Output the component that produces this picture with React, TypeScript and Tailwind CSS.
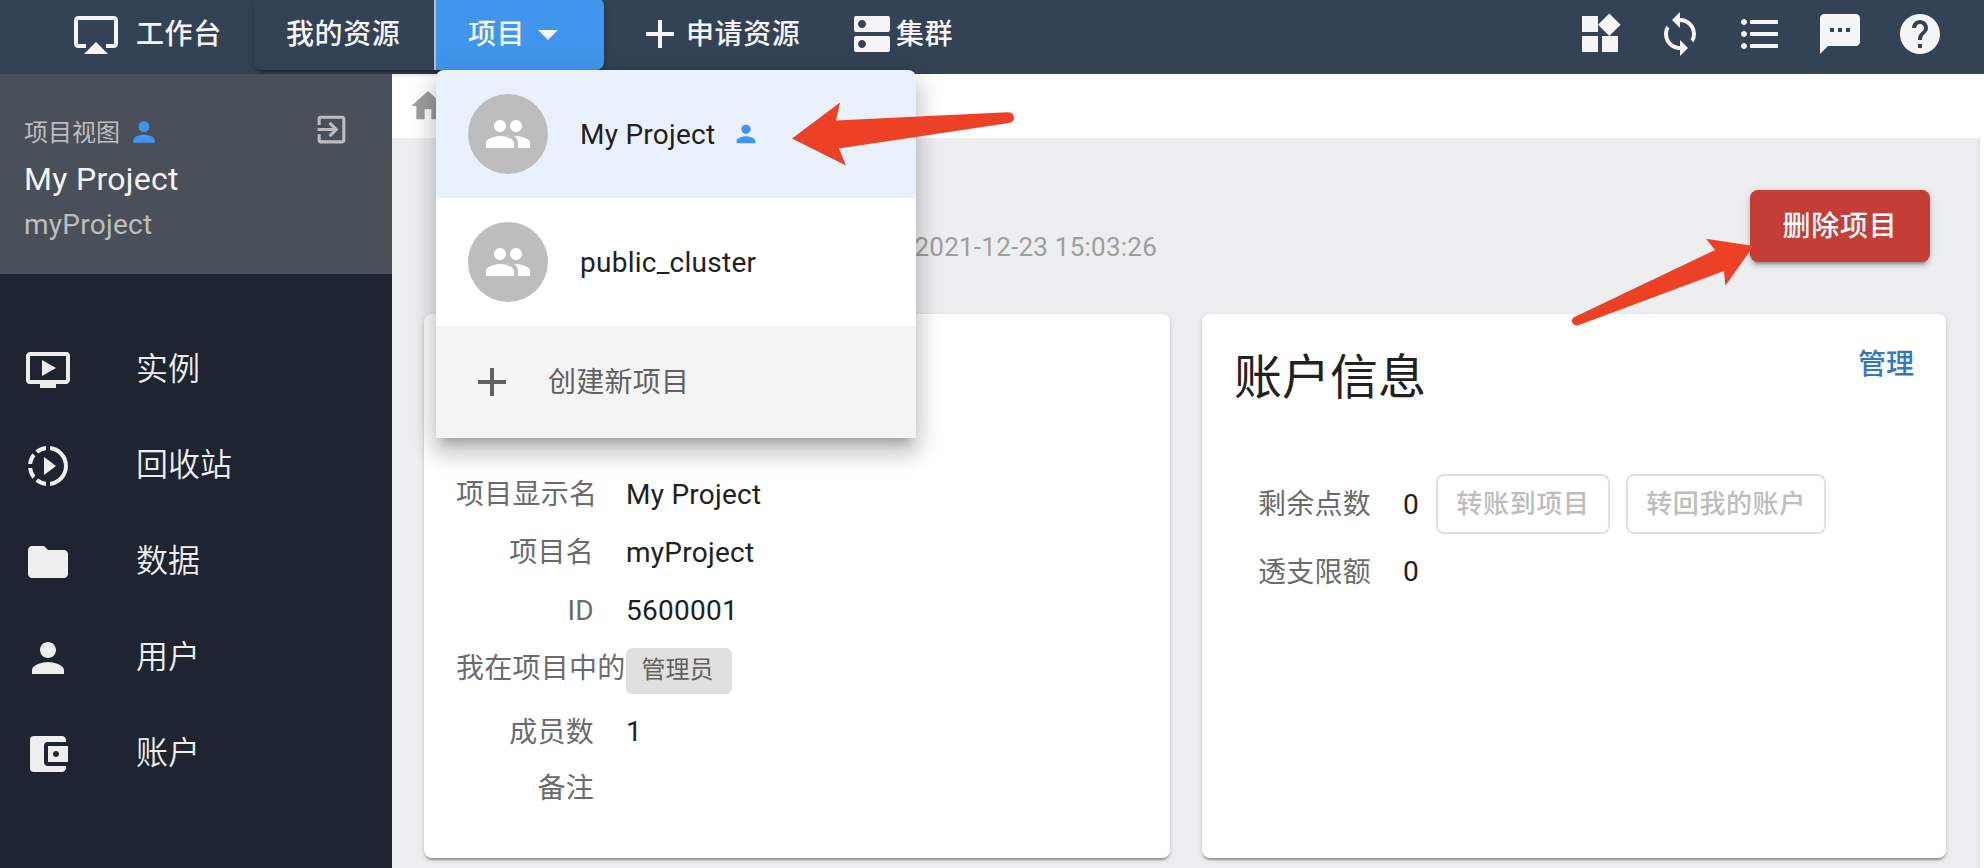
import type { ReactNode } from "react";
import type { IconType } from "react-icons";
import {
  MdAccountBalanceWallet,
  MdAdd,
  MdAirplay,
  MdArrowDropDown,
  MdDns,
  MdExitToApp,
  MdFolder,
  MdFormatListBulleted,
  MdGroup,
  MdHelp,
  MdHome,
  MdOndemandVideo,
  MdPerson,
  MdSlowMotionVideo,
  MdSync,
  MdTextsms,
  MdWidgets,
} from "react-icons/md";

const menu: { icon: IconType; label: string }[] = [
  { icon: MdOndemandVideo, label: "实例" },
  { icon: MdSlowMotionVideo, label: "回收站" },
  { icon: MdFolder, label: "数据" },
  { icon: MdPerson, label: "用户" },
  { icon: MdAccountBalanceWallet, label: "账户" },
];

const tools: IconType[] = [MdWidgets, MdSync, MdFormatListBulleted, MdTextsms, MdHelp];

function TopBar() {
  return (
    <header className="flex h-[74px] shrink-0 items-start bg-[#344255] text-[28px] leading-[40px] font-medium tracking-[0.6px] text-[#f5f5f5]">
      <div className="-mt-0.5 flex h-[72px] items-center pl-[72px]">
        <MdAirplay className="mr-4 size-12" />
        <span className="w-[118px] pt-0.5">工作台</span>
      </div>
      <div className="-mt-0.5 flex h-[72px] rounded-lg shadow-[0_6px_2px_-4px_rgba(0,0,0,0.2),0_4px_4px_0_rgba(0,0,0,0.14),0_2px_10px_0_rgba(0,0,0,0.12)]">
        <div className="flex w-[182px] items-center rounded-l-lg border-r-2 border-[#bdbdbd] bg-[#344255] pt-0.5 pl-8">我的资源</div>
        <div className="flex w-[168px] items-center rounded-r-lg bg-[#4096ed] pl-8">
          <span className="w-14 pt-0.5 whitespace-nowrap">项目</span>
          <MdArrowDropDown className="size-12" />
        </div>
      </div>
      <div className="-mt-0.5 flex h-[72px] items-center pl-8">
        <MdAdd className="mr-0.5 size-12" />
        <span className="w-[162px] pt-0.5">申请资源</span>
        <MdDns className="size-12" />
        <span className="pt-0.5">集群</span>
      </div>
      <div className="-mt-0.5 ml-auto flex h-[72px] items-center gap-8 pr-10">
        {tools.map((Icon, i) => (
          <Icon key={i} className="size-12" />
        ))}
      </div>
    </header>
  );
}

function Sidebar() {
  return (
    <aside className="flex w-[392px] shrink-0 flex-col bg-[#1e2430]">
      <div className="flex h-[200px] justify-between bg-[#4a505a] pl-6">
        <div className="pt-[42px]">
          <div className="flex h-8 items-center gap-2 text-2xl leading-8 text-[#bdbdbd]">
            <span className="pt-0.5">项目视图</span>
            <MdPerson className="size-8 text-[#4096ed]" />
          </div>
          <div className="mt-[9px] text-[32px] leading-[44px] tracking-[0.3px] text-[#f5f5f5]">My Project</div>
          <div className="mt-0.5 text-[28px] leading-[44px] tracking-[0.26px] text-[#bdbdbd]">myProject</div>
        </div>
        <MdExitToApp className="mt-[37px] mr-[42px] size-[37px] text-[#bdbdbd]" />
      </div>
      <nav className="flex flex-col pt-12">
        {menu.map(({ icon: Icon, label }) => (
          <div key={label} className="flex h-24 items-center pl-6 text-[32px] leading-[48px] font-[350] text-[#eeeeee]">
            <Icon className="mr-16 size-12" />
            <span className="pb-0.5">{label}</span>
          </div>
        ))}
      </nav>
    </aside>
  );
}

function Field({ label, className, children }: { label: string; className: string; children?: ReactNode }) {
  return (
    <div className={`flex items-center ${className}`}>
      <dt className="mr-8 w-[138px] text-right whitespace-nowrap text-[#6b6b6b]">{label}</dt>
      <dd className="text-[#212121]">{children}</dd>
    </div>
  );
}

const cardShadow =
  "shadow-[0_4px_2px_-2px_rgba(0,0,0,0.2),0_2px_2px_0_rgba(0,0,0,0.14),0_2px_6px_0_rgba(0,0,0,0.12)]";

function ProjectCard() {
  return (
    <section className={`h-[544px] rounded-lg bg-white px-8 pt-[152px] ${cardShadow}`}>
      <dl className="text-[28px] leading-[40px] tracking-[0.26px]">
        <Field className="h-[58px]" label="项目显示名">My Project</Field>
        <Field className="h-[58px]" label="项目名">myProject</Field>
        <Field className="h-[58px]" label="ID">5600001</Field>
        <Field className="h-[58px]" label="我在项目中的">
          <span className="mt-1 flex h-[46px] w-[106px] items-center justify-center rounded-md bg-[#e0e0e0] pr-[3px] pb-0.5 text-2xl leading-8 tracking-normal text-[#616161]">
            管理员
          </span>
        </Field>
        <Field className="mt-1.5 h-[58px]" label="成员数">
          <span className="block pb-0.5">1</span>
        </Field>
        <Field className="h-[54px]" label="备注" />
      </dl>
    </section>
  );
}

function AccountCard() {
  return (
    <section className={`h-[544px] rounded-lg bg-white px-8 ${cardShadow}`}>
      <div className="flex h-[144px] justify-between">
        <h2 className="pt-[30px] text-5xl leading-[68px] text-[#212121]">账户信息</h2>
        <a className="pt-[31px] text-[28px] leading-[40px] font-medium text-[#2f76cc]">管理</a>
      </div>
      <div className="pt-4 pl-6 text-[28px] leading-[40px] tracking-[0.26px] text-[#6b6b6b]">
        <div className="flex h-[60px] items-center">
          <span className="w-[145px] pt-0.5">剩余点数</span>
          <span className="w-[33px] pt-0.5 text-[#212121]">0</span>
          <div className="flex gap-4 text-[26px] leading-[36px] font-medium tracking-[0.6px] text-[#bdbdbd]">
            <div className="flex h-[60px] w-[174px] items-center justify-center rounded-lg border-2 border-[#e0e0e0]">转账到项目</div>
            <div className="flex h-[60px] w-[200px] items-center justify-center rounded-lg border-2 border-[#e0e0e0]">转回我的账户</div>
          </div>
        </div>
        <div className="mt-2 flex h-[60px] items-center">
          <span className="w-[145px] pt-0.5">透支限额</span>
          <span className="text-[#212121]">0</span>
        </div>
      </div>
    </section>
  );
}

function ProjectRow({ name, mine }: { name: string; mine?: boolean }) {
  return (
    <div className={`flex h-32 items-center pl-8 text-[#212121] ${mine ? "bg-[#e9f1fd]" : "bg-white"}`}>
      <div className="mr-8 flex size-20 items-center justify-center rounded-full bg-[#bdbdbd] text-white">
        <MdGroup className="size-12" />
      </div>
      <span className="pt-0.5">{name}</span>
      {mine && <MdPerson className="ml-[17px] size-7 text-[#4096ed]" />}
    </div>
  );
}

function ProjectMenu() {
  return (
    <div className="absolute top-[70px] left-[436px] w-[480px] overflow-hidden rounded-t-lg text-[28px] leading-[42px] tracking-[0.26px] shadow-[0_10px_10px_-6px_rgba(0,0,0,0.2),0_16px_20px_2px_rgba(0,0,0,0.14),0_6px_28px_4px_rgba(0,0,0,0.12)]">
      <ProjectRow name="My Project" mine />
      <ProjectRow name="public_cluster" />
      <div className="flex h-28 items-center bg-[#f4f4f4] pl-8 text-[#616161]">
        <MdAdd className="mr-8 size-12" />
        <span className="pt-0.5">创建新项目</span>
      </div>
    </div>
  );
}

function Arrows() {
  return (
    <svg className="pointer-events-none absolute inset-0" width="1984" height="868" viewBox="0 0 1984 868" fill="#ec4124">
      <path d="M792 138.5 L840 102.5 L836 120.5 L1007 112.2 Q1014 112 1014 118 Q1014 122 1009 123 L839 148.5 L846 165.5 Z" />
      <path d="M1753.5 246 L1706 238.7 L1715 250 L1574 317.2 Q1571 319 1572 322 Q1574 326.5 1579 325 L1724 271 L1725.4 285.7 Z" />
    </svg>
  );
}

export default function App() {
  return (
    <div className="relative flex h-[868px] w-[1984px] flex-col overflow-hidden bg-white font-[Roboto,'Noto_Sans_CJK_SC',sans-serif]">
      <TopBar />
      <div className="flex min-h-0 flex-1">
        <Sidebar />
        <main className="flex min-w-0 flex-1 flex-col">
          <div className="flex h-16 items-center pl-4">
            <MdHome className="size-10 text-[#9e9e9e]" />
          </div>
          <div className="mr-1 flex-1 border-r-2 border-[#e4e5e7] bg-[#edeef0] px-8">
            <div className="flex h-44 items-start justify-between">
              <div className="w-[733px] pt-[90px] text-right text-[26px] leading-[38px] tracking-[0.24px] text-[#9e9e9e]">2021-12-23 15:03:26</div>
              <button className="mt-[52px] mr-4 h-[72px] w-[180px] rounded-lg bg-[#c43e37] pt-0.5 text-[28px] leading-[40px] font-medium tracking-[0.8px] text-white shadow-[0_6px_2px_-4px_rgba(0,0,0,0.2),0_4px_4px_0_rgba(0,0,0,0.14),0_2px_10px_0_rgba(0,0,0,0.12)]">
                删除项目
              </button>
            </div>
            <div className="grid grid-cols-[746px_744px] gap-8">
              <ProjectCard />
              <AccountCard />
            </div>
          </div>
        </main>
      </div>
      <ProjectMenu />
      <Arrows />
    </div>
  );
}
